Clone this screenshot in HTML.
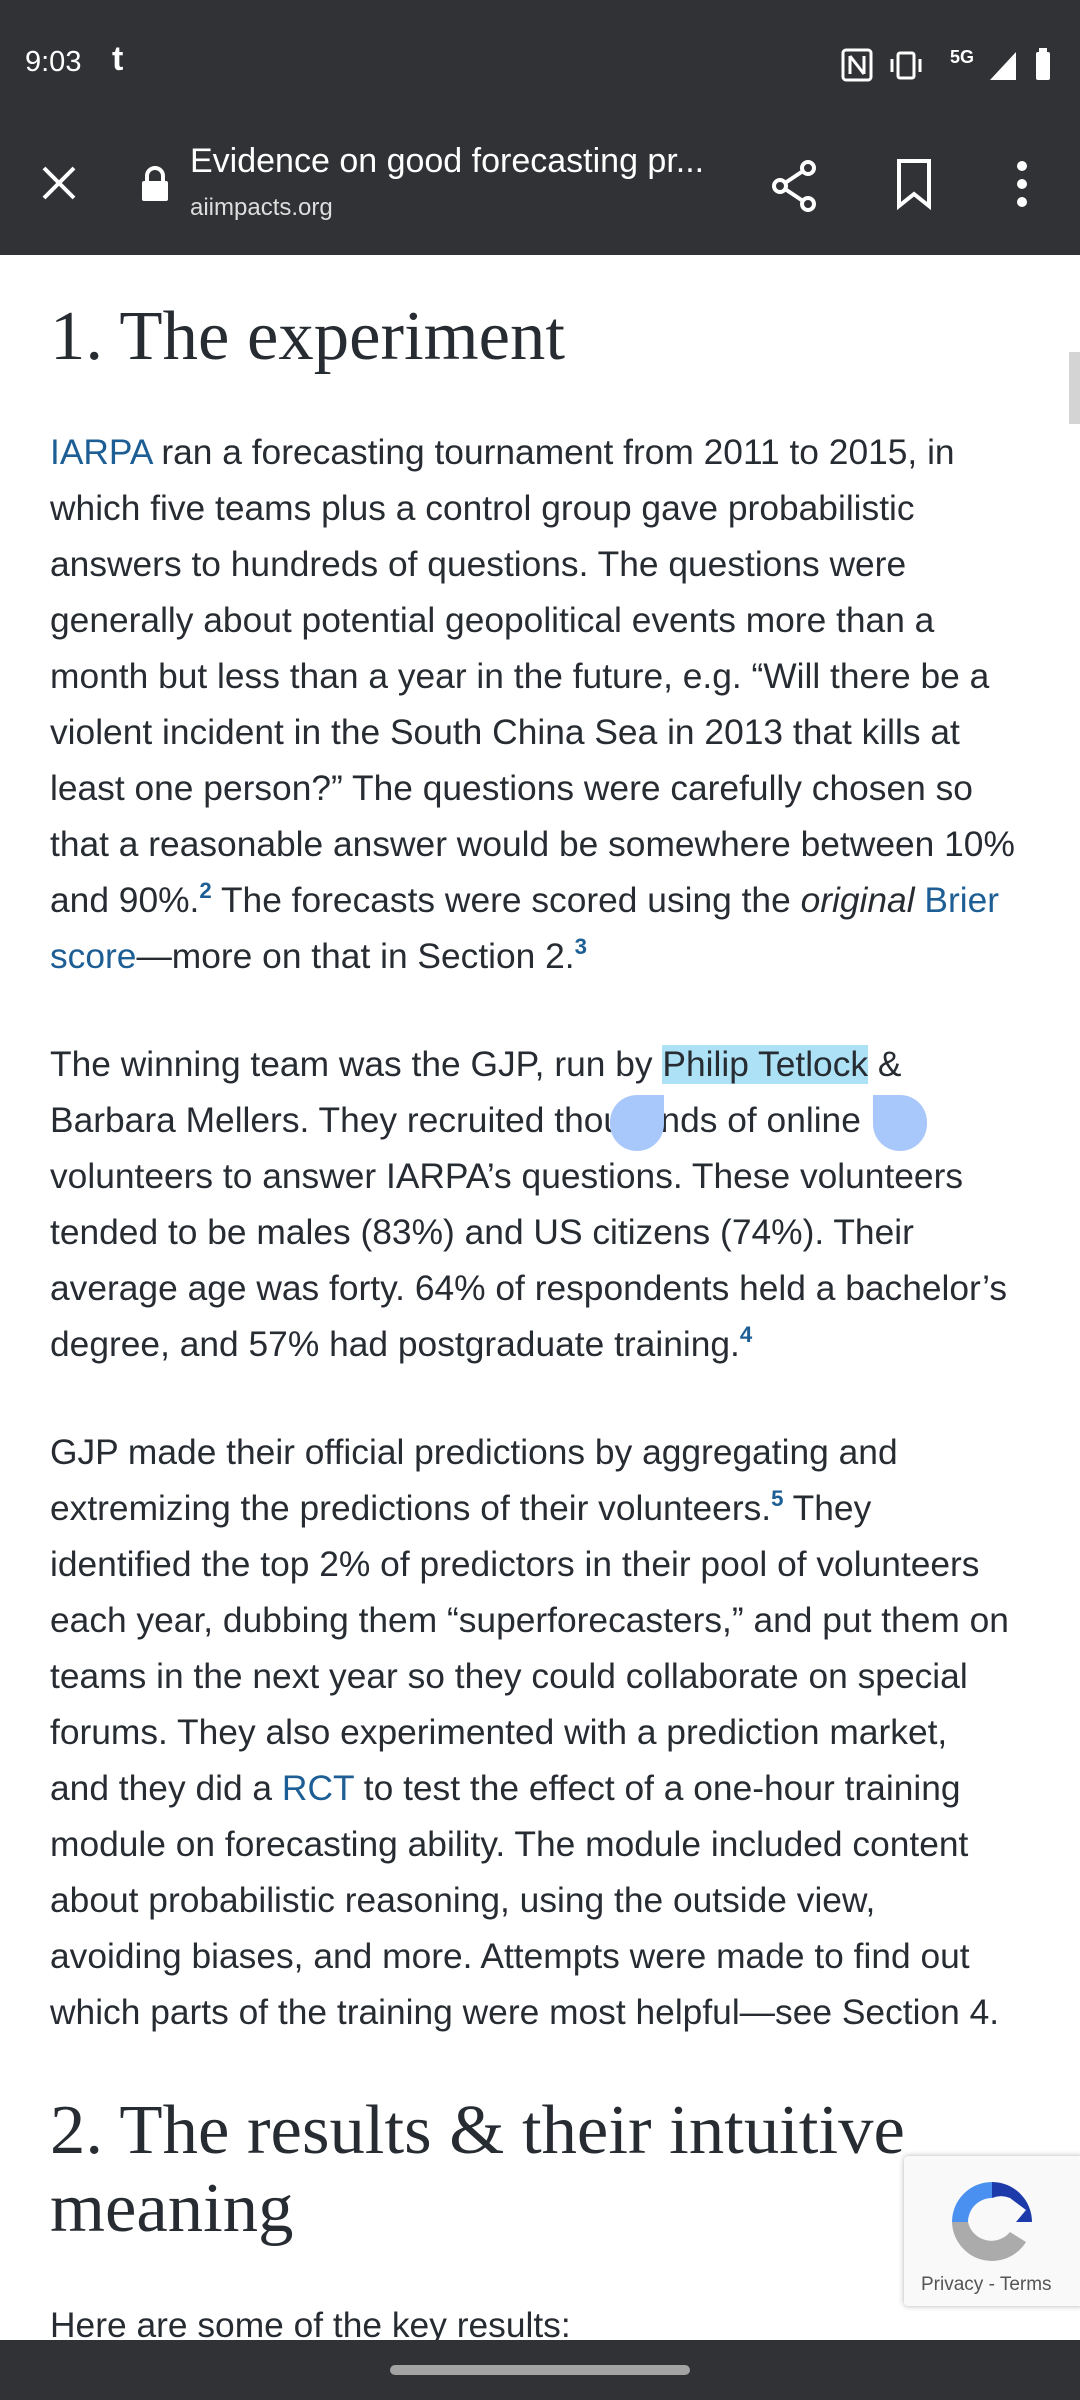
<!DOCTYPE html>
<html><head><meta charset="utf-8"><style>
*{margin:0;padding:0;box-sizing:border-box}
body{width:1080px;height:2400px;background:#fff;position:relative;overflow:hidden;font-family:"Liberation Sans",sans-serif;color:#272c33}
.sb{position:absolute;left:0;top:0;width:1080px;height:116px;background:#313236;color:#fff}
.tb{position:absolute;left:0;top:116px;width:1080px;height:139px;background:#313236;color:#fff}
.p{position:absolute;left:50px;font-size:35px;line-height:56px}
.l{white-space:nowrap;transform:scaleX(1.01);transform-origin:0 50%;height:56px}
a{color:#1d5e94;text-decoration:none}
sup{color:#1d5e94;font-weight:bold;font-size:22px;vertical-align:0;position:relative;top:-14px}
h2{position:absolute;left:50px;font-family:"Liberation Serif",serif;font-weight:normal;font-size:70px;line-height:78px;color:#272c33;transform:scaleX(1.01);transform-origin:0 50%;white-space:nowrap}
.hl{background:#ade1f5}
.hd{position:absolute;width:54px;height:56px;background:#a8c7fa}
</style></head><body>
<div class="sb">
<div style="position:absolute;left:25px;top:46px;font-size:29px">9:03</div>
<div style="position:absolute;left:112px;top:40px;font-size:34px;font-weight:bold">t</div>
<svg style="position:absolute;left:840px;top:46px" width="210" height="38" viewBox="0 0 210 38">
<rect x="3" y="4" width="28" height="30" rx="3" fill="none" stroke="#fff" stroke-width="3"/><path d="M10 10v18M10 10l14 18M24 10v18" stroke="#fff" stroke-width="3" fill="none"/>
<rect x="58" y="7" width="16" height="25" rx="2" fill="none" stroke="#fff" stroke-width="3"/><path d="M52 13v13M80 13v13" stroke="#fff" stroke-width="3"/>
<text x="110" y="17" font-size="18" fill="#fff" font-weight="bold" font-family="Liberation Sans">5G</text>
<path d="M150 34L176 6V34Z" fill="#fff"/>
<rect x="196" y="6" width="14" height="28" rx="2" fill="#fff"/><rect x="199" y="2" width="8" height="5" fill="#fff"/>
</svg>
</div>
<div class="tb">
<svg style="position:absolute;left:40px;top:48px" width="38" height="38"><path d="M4 4L34 34M34 4L4 34" stroke="#fff" stroke-width="4"/></svg>
<svg style="position:absolute;left:140px;top:50px" width="30" height="36"><path d="M7 16V10a8 8 0 0 1 16 0v6" stroke="#fff" stroke-width="4" fill="none"/><rect x="2" y="15" width="26" height="20" rx="2" fill="#fff"/></svg>
<div style="position:absolute;left:190px;top:26px;font-size:34px;white-space:nowrap">Evidence on good forecasting pr...</div>
<div style="position:absolute;left:190px;top:78px;font-size:24px;color:#ddd">aiimpacts.org</div>
<svg style="position:absolute;left:770px;top:42px" width="50" height="56"><circle cx="38" cy="10" r="6" fill="none" stroke="#fff" stroke-width="4"/><circle cx="10" cy="28" r="6" fill="none" stroke="#fff" stroke-width="4"/><circle cx="38" cy="46" r="6" fill="none" stroke="#fff" stroke-width="4"/><path d="M15 25L33 13M15 31L33 43" stroke="#fff" stroke-width="4"/></svg>
<svg style="position:absolute;left:895px;top:42px" width="40" height="52"><path d="M4 3H34V48L19 36L4 48Z" fill="none" stroke="#fff" stroke-width="4"/></svg>
<svg style="position:absolute;left:1012px;top:42px" width="20" height="52"><circle cx="10" cy="8" r="5" fill="#fff"/><circle cx="10" cy="26" r="5" fill="#fff"/><circle cx="10" cy="44" r="5" fill="#fff"/></svg>
</div>
<div style="position:absolute;left:1069px;top:352px;width:11px;height:72px;background:#d4d4d4"></div>

<h2 style="top:298px">1. The experiment</h2>

<div class="p" style="top:425px">
<div class="l"><a>IARPA</a> ran a forecasting tournament from 2011 to 2015, in</div>
<div class="l">which five teams plus a control group gave probabilistic</div>
<div class="l">answers to hundreds of questions. The questions were</div>
<div class="l">generally about potential geopolitical events more than a</div>
<div class="l">month but less than a year in the future, e.g. “Will there be a</div>
<div class="l">violent incident in the South China Sea in 2013 that kills at</div>
<div class="l">least one person?” The questions were carefully chosen so</div>
<div class="l">that a reasonable answer would be somewhere between 10%</div>
<div class="l">and 90%.<sup>2</sup> The forecasts were scored using the <i>original</i> <a>Brier</a></div>
<div class="l"><a>score</a>—more on that in Section 2.<sup>3</sup></div>
</div>

<div class="p" style="top:1037px">
<div class="l">The winning team was the GJP, run by <span class="hl">Philip Tetlock</span> &amp;</div>
<div class="l">Barbara Mellers. They recruited thousands of online</div>
<div class="l">volunteers to answer IARPA’s questions. These volunteers</div>
<div class="l">tended to be males (83%) and US citizens (74%). Their</div>
<div class="l">average age was forty. 64% of respondents held a bachelor’s</div>
<div class="l">degree, and 57% had postgraduate training.<sup>4</sup></div>
</div>
<div class="hd" style="left:610px;top:1095px;border-radius:27px 0 27px 27px"></div>
<div class="hd" style="left:873px;top:1095px;border-radius:0 27px 27px 27px"></div>

<div class="p" style="top:1425px">
<div class="l">GJP made their official predictions by aggregating and</div>
<div class="l">extremizing the predictions of their volunteers.<sup>5</sup> They</div>
<div class="l">identified the top 2% of predictors in their pool of volunteers</div>
<div class="l">each year, dubbing them “superforecasters,” and put them on</div>
<div class="l">teams in the next year so they could collaborate on special</div>
<div class="l">forums. They also experimented with a prediction market,</div>
<div class="l">and they did a <a>RCT</a> to test the effect of a one-hour training</div>
<div class="l">module on forecasting ability. The module included content</div>
<div class="l">about probabilistic reasoning, using the outside view,</div>
<div class="l">avoiding biases, and more. Attempts were made to find out</div>
<div class="l">which parts of the training were most helpful—see Section 4.</div>
</div>

<h2 style="top:2092px">2. The results &amp; their intuitive<br>meaning</h2>

<div class="p" style="top:2298px"><div class="l">Here are some of the key results:</div></div>

<div style="position:absolute;left:904px;top:2156px;width:180px;height:150px;background:#f9f9f9;border-radius:4px;box-shadow:0 0 6px rgba(0,0,0,.3)">
<svg style="position:absolute;left:40px;top:18px" width="96" height="96" viewBox="0 0 96 96">
<path d="M48 8a40 40 0 0 0-40 40h16a24 24 0 0 1 24-24z" fill="#4a90f0"/>
<path d="M48 8a40 40 0 0 1 40 40H72l10-12-16-12a24 24 0 0 0-18 0z" fill="#1c3aa9"/>
<path d="M8 48a40 40 0 0 0 74 20L66 58a24 24 0 0 1-42-10z" fill="#ababab"/>
</svg>
<div style="position:absolute;left:17px;top:118px;font-size:19px;color:#555;white-space:nowrap">Privacy - Terms</div>
</div>

<div style="position:absolute;left:0;top:2340px;width:1080px;height:60px;background:#313236"></div>
<div style="position:absolute;left:390px;top:2365px;width:300px;height:10px;border-radius:5px;background:#a3a3a3"></div>
</body></html>
